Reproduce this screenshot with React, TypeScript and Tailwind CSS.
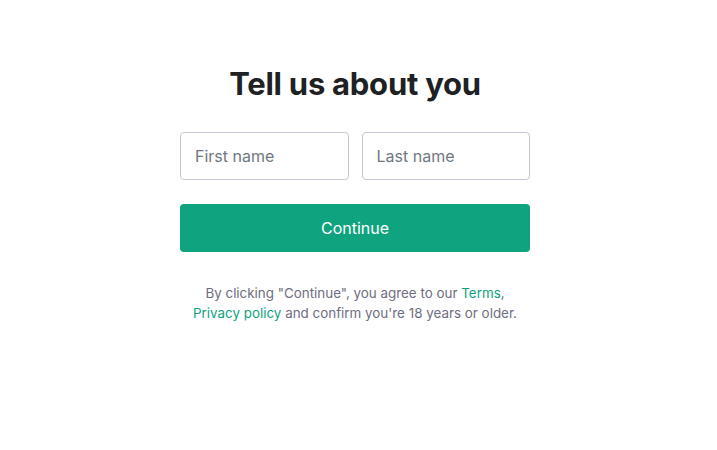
import React from "react";

export default function App() {
  return (
    <div className="w-[717px] h-[450px] bg-white flex justify-center pr-[7px]" style={{ fontFamily: "Inter, 'Noto Sans', sans-serif" }}>
      <div className="w-[350px] flex flex-col items-center pt-[62px]">
        <h1 className="text-[31px] leading-[44px] font-bold text-[#202123] tracking-[-0.25px]">Tell us about you</h1>
        <div className="w-full flex gap-[13px] mt-[26px]">
          <input
            className="flex-1 min-w-0 h-[48px] rounded-[4px] border border-[#c2c8d0] px-[14px] text-[16px] text-[#2d333a] placeholder:text-[#6f7780] outline-none"
            placeholder="First name"
          />
          <input
            className="flex-1 min-w-0 h-[48px] rounded-[4px] border border-[#c2c8d0] px-[14px] text-[16px] text-[#2d333a] placeholder:text-[#6f7780] outline-none"
            placeholder="Last name"
          />
        </div>
        <button className="w-full h-[48px] mt-[24px] rounded-[4px] bg-[#10a37f] text-white text-[16px]">Continue</button>
        <p className="mt-[31px] text-[13.4px] leading-[20px] text-[#6e6e80] text-center">
          By clicking "Continue", you agree to our <span className="text-[#10a37f]">Terms</span>,
          <br />
          <span className="text-[#10a37f]">Privacy policy</span> and confirm you're 18 years or older.
        </p>
      </div>
    </div>
  );
}
